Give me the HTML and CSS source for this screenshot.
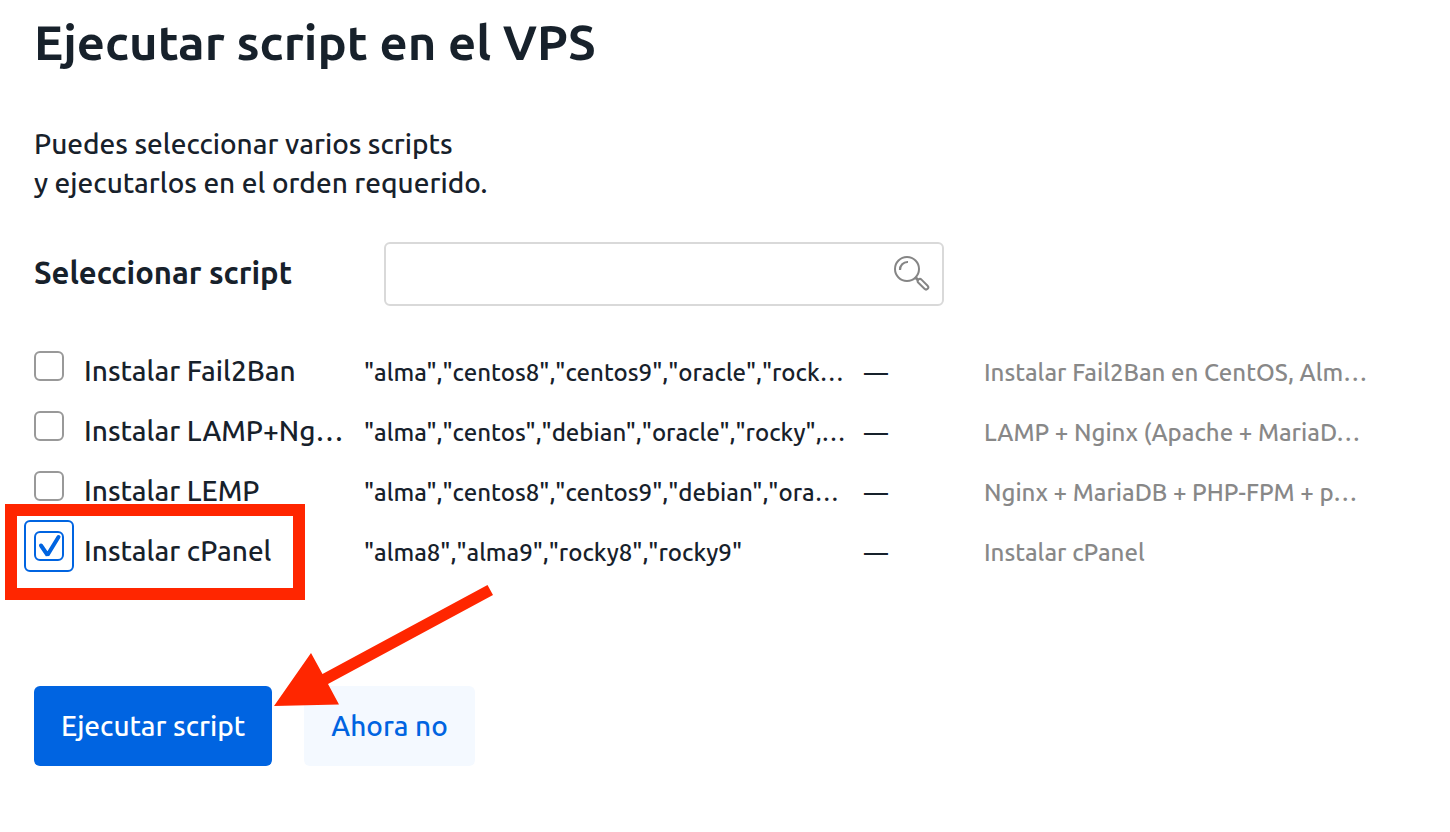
FILE: index.html
```
<!DOCTYPE html>
<html lang="es">

<head>
    <meta charset="UTF-8">
    <meta name="viewport" content="width=device-width, initial-scale=1.0">
    <title>Ejecutar script en el VPS</title>
    <link rel="stylesheet" href="styles.css">
</head>

<body>
    <form class="dialog">
        <h1>Ejecutar script en el VPS</h1>
        <p class="intro">Puedes seleccionar varios scripts<br>y ejecutarlos en el orden requerido.</p>

        <div class="search">
            <label for="search">Seleccionar script</label>
            <div class="search-box">
                <input type="text" id="search">
                <svg class="search-icon" viewBox="0 0 36 36" fill="none" stroke="#858585" stroke-width="2">
                    <circle cx="13" cy="13" r="12"/>
                    <path d="M6 14A7.500 7.500 0 0 1 14 6" stroke-width="2.200"/>
                    <path d="M21.500 21.500l3 3" stroke-width="3"/>
                    <rect x="22.500" y="26" width="13" height="4.400" rx="2.200" transform="rotate(45 29 28.200)"/>
                </svg>
            </div>
        </div>

        <table class="scripts">
            <tr>
                <td class="name"><div class="pick"><input type="checkbox" id="fail2ban"><label for="fail2ban">Instalar Fail2Ban</label></div></td>
                <td class="system">"alma","centos8","centos9","oracle","rock…</td>
                <td class="dash">—</td>
                <td class="about">Instalar Fail2Ban en CentOS, Alm…</td>
            </tr>
            <tr>
                <td class="name"><div class="pick"><input type="checkbox" id="lamp"><label for="lamp">Instalar LAMP+Ng…</label></div></td>
                <td class="system">"alma","centos","debian","oracle","rocky",…</td>
                <td class="dash">—</td>
                <td class="about">LAMP + Nginx (Apache + MariaD…</td>
            </tr>
            <tr>
                <td class="name"><div class="pick"><input type="checkbox" id="lemp"><label for="lemp">Instalar LEMP</label></div></td>
                <td class="system">"alma","centos8","centos9","debian","ora…</td>
                <td class="dash">—</td>
                <td class="about">Nginx + MariaDB + PHP-FPM + p…</td>
            </tr>
            <tr>
                <td class="name"><div class="pick marked"><input type="checkbox" id="cpanel" checked><label for="cpanel">Instalar cPanel</label></div></td>
                <td class="system">"alma8","alma9","rocky8","rocky9"</td>
                <td class="dash">—</td>
                <td class="about">Instalar cPanel</td>
            </tr>
        </table>

        <div class="actions">
            <button type="button" class="btn primary">Ejecutar script</button>
            <button type="button" class="btn secondary">Ahora no</button>
            <svg class="arrow" viewBox="0 0 220 122" fill="#ff2600">
                <path d="M0 121L37 68L48.500 89L213.500 0L219 10L54 99L65 119.500Z"/>
            </svg>
        </div>
    </form>
</body>

</html>
```

FILE: styles.css
```
* {
    box-sizing: border-box;
    margin: 0;
    padding: 0;
}

body {
    background-color: #fff;
    color: #17212b;
    font-family: Ubuntu, "Noto Sans", sans-serif;
    font-size: 28px;
    font-weight: 500;
}

input,
button {
    font: inherit;
}

.dialog {
    padding: 10px 34px;
}

h1 {
    font-size: 49px;
    font-weight: 600;
    line-height: 64px;
}

.intro {
    margin-top: 50px;
    line-height: 39px;
}

.search {
    display: flex;
    align-items: center;
    margin-top: 40px;
}

.search label {
    width: 350px;
    padding-bottom: 4px;
    font-size: 31px;
    font-weight: 600;
}

.search-box {
    position: relative;
    width: 560px;
}

.search-box input {
    display: block;
    width: 100%;
    height: 64px;
    padding: 0 60px 0 16px;
    border: 2px solid #d9d9d9;
    border-radius: 6px;
    background-color: #fff;
}

.search-icon {
    position: absolute;
    top: 14px;
    right: 14px;
    width: 36px;
    height: 36px;
}

.scripts {
    width: 100%;
    margin-top: 35px;
    border-collapse: collapse;
    table-layout: fixed;
}

.scripts td {
    height: 60px;
    padding-top: 2px;
    white-space: nowrap;
    font-size: 24px;
}

.scripts .name {
    width: 330px;
    padding-top: 0;
    font-size: 28px;
}

.scripts .system {
    width: 500px;
}

.scripts .dash {
    width: 120px;
}

.scripts .about {
    color: #888;
}

.pick {
    position: relative;
    display: flex;
    gap: 20px;
    height: 60px;
    padding-top: 10px;
    line-height: 40px;
}

.pick input {
    appearance: none;
    width: 30px;
    height: 30px;
    border: 2px solid #999;
    border-radius: 6px;
}

.pick input:checked {
    border-color: #0064e1;
    background: url("data:image/svg+xml,%3Csvg xmlns='http://www.w3.org/2000/svg' viewBox='0 0 26 26' fill='none' stroke='%230064e1' stroke-width='4' stroke-linecap='round' stroke-linejoin='bevel'%3E%3Cpath d='M5 12.500L11.500 22L22.500 4'/%3E%3C/svg%3E") center / 26px 26px no-repeat;
}

/* focus ring of the ticked box */
.marked::before {
    content: "";
    position: absolute;
    box-sizing: border-box;
    top: -1px;
    left: -10px;
    width: 50px;
    height: 52px;
    border: 2px solid #0064e1;
    border-radius: 6px;
    pointer-events: none;
}

/* red frame round the chosen script */
.marked::after {
    content: "";
    position: absolute;
    box-sizing: border-box;
    top: -17px;
    left: -29px;
    width: 300px;
    height: 96px;
    border: 12px solid #ff2600;
    pointer-events: none;
}

.actions {
    position: relative;
    display: flex;
    gap: 32px;
    margin-top: 105px;
}

.btn {
    height: 80px;
    padding: 0 27px 2px;
    border: 0;
    border-radius: 6px;
    cursor: pointer;
}

.primary {
    background-color: #0064e1;
    color: #fff;
}

.secondary {
    background-color: #f4f9ff;
    color: #0064e1;
}

.arrow {
    position: absolute;
    top: -101px;
    left: 240px;
    width: 220px;
    height: 122px;
    pointer-events: none;
}
```
